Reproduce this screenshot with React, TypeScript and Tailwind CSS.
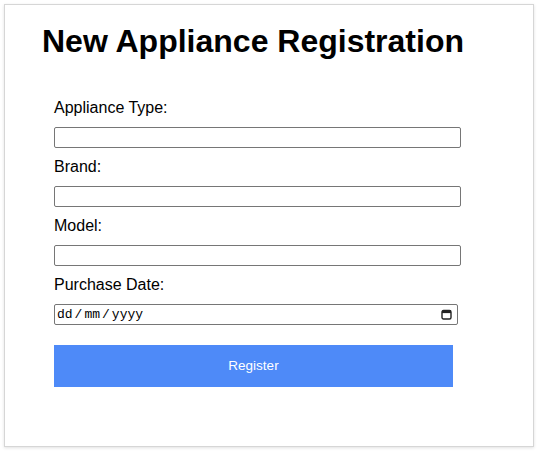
import React from "react";

function Field({ label }: { label: string }) {
    return (
        <div className="flex flex-col">
            <label className="block text-[16px] leading-[18px] text-black">{label}</label>
            <input
                type="text"
                className="mt-[10px] mb-[10px] w-[407px] h-[21px] border border-[#767676] rounded-[2px] bg-white px-[2px] text-[13px] outline-none"
            />
        </div>
    );
}

function CalendarIcon() {
    return (
        <svg width="11" height="11" viewBox="0 0 11 11" className="shrink-0">
            <rect x="1" y="1.5" width="9" height="8.5" rx="1.5" fill="none" stroke="#222" strokeWidth="1.4" />
            <rect x="1" y="1.5" width="9" height="2.6" fill="#222" />
        </svg>
    );
}

export default function App() {
    return (
        <div className="p-[4px] bg-white min-h-[451px]" style={{ fontFamily: '"Liberation Sans", Arial, sans-serif' }}>
            <div className="w-[530px] h-[443px] border border-[#d6d6d6] bg-white shadow-[0_1px_3px_rgba(0,0,0,0.12)]">
                <h1 className="mt-[18px] ml-[37px] text-[32px] leading-[37px] font-bold text-black">
                    New Appliance Registration
                </h1>
                <form className="mt-[39px] ml-[49px] flex flex-col" onSubmit={(e) => e.preventDefault()}>
                    <Field label="Appliance Type:" />
                    <Field label="Brand:" />
                    <Field label="Model:" />
                    <div className="flex flex-col">
                        <label className="block text-[16px] leading-[18px] text-black">Purchase Date:</label>
                        <div className="mt-[10px] w-[404px] h-[21px] border border-[#767676] rounded-[2px] bg-white
                            flex items-center justify-between pl-[2px] pr-[5px]">
                            <span
                                className="flex text-[13px] leading-[15px] text-black"
                                style={{ fontFamily: '"Liberation Mono", "Courier New", monospace' }}
                            >
                                <span>dd</span>
                                <span className="mx-[2px]">/</span>
                                <span>mm</span>
                                <span className="mx-[2px]">/</span>
                                <span>yyyy</span>
                            </span>
                            <CalendarIcon />
                        </div>
                    </div>
                    <button
                        type="submit"
                        className="mt-[20px] w-[399px] h-[42px] bg-[#4e8af8] text-white text-[13.5px]"
                    >
                        Register
                    </button>
                </form>
            </div>
        </div>
    );
}
